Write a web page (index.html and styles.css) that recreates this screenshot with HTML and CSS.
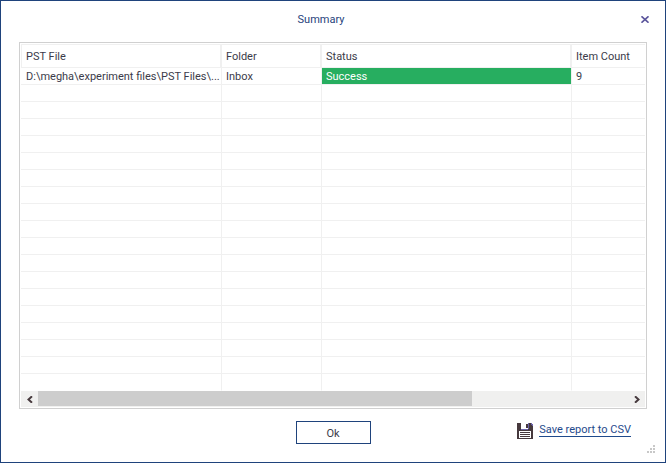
FILE: index.html
```html
<!DOCTYPE html>
<html lang="en">
<head>
    <meta charset="UTF-8">
    <meta name="viewport" content="width=device-width, initial-scale=1.0">
    <title>Summary</title>
    <link rel="stylesheet" href="styles.css">
</head>
<body>
    <div class="dialog">
        <header class="titlebar">
            <h1 class="title">Summary</h1>
            <button class="close" type="button" aria-label="Close">
                <svg width="8" height="7" viewBox="0 0 8 7"><path d="M0.5 0.3L7.5 6.7M7.5 0.3L0.5 6.7" stroke="#5b559c" stroke-width="1.6"/></svg>
            </button>
        </header>

        <main class="report">
            <table class="grid">
                <colgroup>
                    <col class="col-file">
                    <col class="col-folder">
                    <col class="col-status">
                    <col>
                </colgroup>
                <thead>
                    <tr><th>PST File</th><th>Folder</th><th>Status</th><th>Item Count</th></tr>
                </thead>
                <tbody>
                    <tr><td>D:\megha\experiment files\PST Files\...</td><td>Inbox</td><td class="success">Success</td><td>9</td></tr>
                    <tr><td></td><td></td><td></td><td></td></tr>
                    <tr><td></td><td></td><td></td><td></td></tr>
                    <tr><td></td><td></td><td></td><td></td></tr>
                    <tr><td></td><td></td><td></td><td></td></tr>
                    <tr><td></td><td></td><td></td><td></td></tr>
                    <tr><td></td><td></td><td></td><td></td></tr>
                    <tr><td></td><td></td><td></td><td></td></tr>
                    <tr><td></td><td></td><td></td><td></td></tr>
                    <tr><td></td><td></td><td></td><td></td></tr>
                    <tr><td></td><td></td><td></td><td></td></tr>
                    <tr><td></td><td></td><td></td><td></td></tr>
                    <tr><td></td><td></td><td></td><td></td></tr>
                    <tr><td></td><td></td><td></td><td></td></tr>
                    <tr><td></td><td></td><td></td><td></td></tr>
                    <tr><td></td><td></td><td></td><td></td></tr>
                    <tr><td></td><td></td><td></td><td></td></tr>
                    <tr><td></td><td></td><td></td><td></td></tr>
                    <tr><td></td><td></td><td></td><td></td></tr>
                </tbody>
            </table>
            <div class="scrollbar">
                <button class="arrow" type="button" aria-label="Scroll left">
                    <svg width="6" height="7" viewBox="0 0 6 7"><path d="M5 0.3L1.5 3.5L5 6.7" fill="none" stroke="#46393d" stroke-width="2"/></svg>
                </button>
                <div class="track"><div class="thumb"></div></div>
                <button class="arrow" type="button" aria-label="Scroll right">
                    <svg width="6" height="7" viewBox="0 0 6 7"><path d="M1 0.3L4.5 3.5L1 6.7" fill="none" stroke="#46393d" stroke-width="2"/></svg>
                </button>
            </div>
        </main>

        <footer class="footer">
            <button class="ok" type="button">Ok</button>
            <a class="save" href="#">
                <svg width="16" height="16" viewBox="0 0 16 16" shape-rendering="crispEdges">
                    <path d="M0 0H4V6H11V0H14L16 2V16H0Z" fill="#46393d"/>
                    <path d="M9 1h2v4h-2z" fill="#46393d"/>
                    <path d="M4 6h7v1H4zM11 0h1v6h-1zM14 0h1v1h1v2h-1V2h-1z" fill="#6c63a8"/>
                    <path d="M2 8h12v7H2z" fill="#fff"/>
                    <path d="M3 9h10v1H3zM3 11h10v1H3zM3 13h10v1H3z" fill="#46393d"/>
                </svg>
                <span class="save-text">Save report to CSV</span>
            </a>
        </footer>

        <svg class="grip" width="8" height="8" viewBox="0 0 8 8"><path d="M6 0h2v2H6zM3 3h2v2H3zM6 3h2v2H6zM0 6h2v2H0zM3 6h2v2H3zM6 6h2v2H6z" fill="#c8c8c8"/></svg>
    </div>
</body>
</html>
```
FILE: styles.css
```css
* {
    box-sizing: border-box;
}
body {
    margin: 0;
    font-family: Roboto, sans-serif;
    font-size: 11px;
    line-height: 14px;
    color: #3b3b4a;
    background-color: #fff;
}
button {
    margin: 0;
    padding: 0;
    border: none;
    background: none;
    font: inherit;
    color: inherit;
    cursor: pointer;
}
svg {
    display: block;
}

/* Window */
.dialog {
    position: relative;
    display: flex;
    flex-direction: column;
    min-height: 100vh;
    border: 1px solid #1f437c;
}
.titlebar {
    display: flex;
    align-items: center;
    height: 41px;
    padding-bottom: 4px;
}
.title {
    flex: 1;
    margin: 0;
    font-size: 11px;
    font-weight: normal;
    text-align: center;
    color: #1f437c;
}
.close {
    width: 24px;
    height: 16px;
}

/* Report table */
.report {
    margin: 0 18px;
    padding: 1px;
    border: 1px solid #d0d0d0;
}
.grid {
    width: 100%;
    table-layout: fixed;
    border-collapse: separate;
    border-spacing: 0;
}
.col-file {
    width: 201px;
}
.col-folder {
    width: 100px;
}
.col-status {
    width: 250px;
}
.grid th,
.grid td {
    height: 17px;
    padding: 2px 4px 0 4px;
    border-right: 1px solid #f0f0f0;
    border-bottom: 1px solid #f0f0f0;
    font-weight: normal;
    text-align: left;
    white-space: nowrap;
    overflow: hidden;
}
.grid th {
    height: 24px;
    border-top: 1px solid #f0f0f0;
    border-right-width: 2px;
}
.grid td:first-child {
    padding-left: 5px;
}
.grid th:first-child {
    border-left: 1px solid #f0f0f0;
}
.grid th:last-child,
.grid td:last-child {
    border-right: none;
}
.grid tbody tr:last-child td {
    border-bottom-color: #fff;
}
.grid .success {
    background-color: #27ae60;
    background-clip: padding-box;
    color: #fff;
}

/* Scrollbar */
.scrollbar {
    display: flex;
    height: 16px;
    background-color: #f0f0ef;
}
.arrow {
    display: flex;
    align-items: center;
    justify-content: center;
    width: 17px;
}
.track {
    flex: 1;
}
.thumb {
    width: calc(100% - 156px);
    height: 15px;
    background-color: #cdcdcd;
}

/* Footer */
.footer {
    display: grid;
    grid-template-columns: 1fr 75px 1fr;
    align-items: start;
    padding: 12px 34px 18px 34px;
}
.ok {
    grid-column: 2;
    height: 23px;
    padding-top: 2px;
    border: 1px solid #1f437c;
}
.save {
    display: flex;
    justify-self: end;
    gap: 6px;
    margin-top: 2px;
    color: #1f4a8c;
    text-decoration: none;
}
.save-text {
    height: 14px;
    border-bottom: 1px solid #1f4a8c;
}
.grip {
    position: absolute;
    right: 10px;
    bottom: 9px;
}
```
